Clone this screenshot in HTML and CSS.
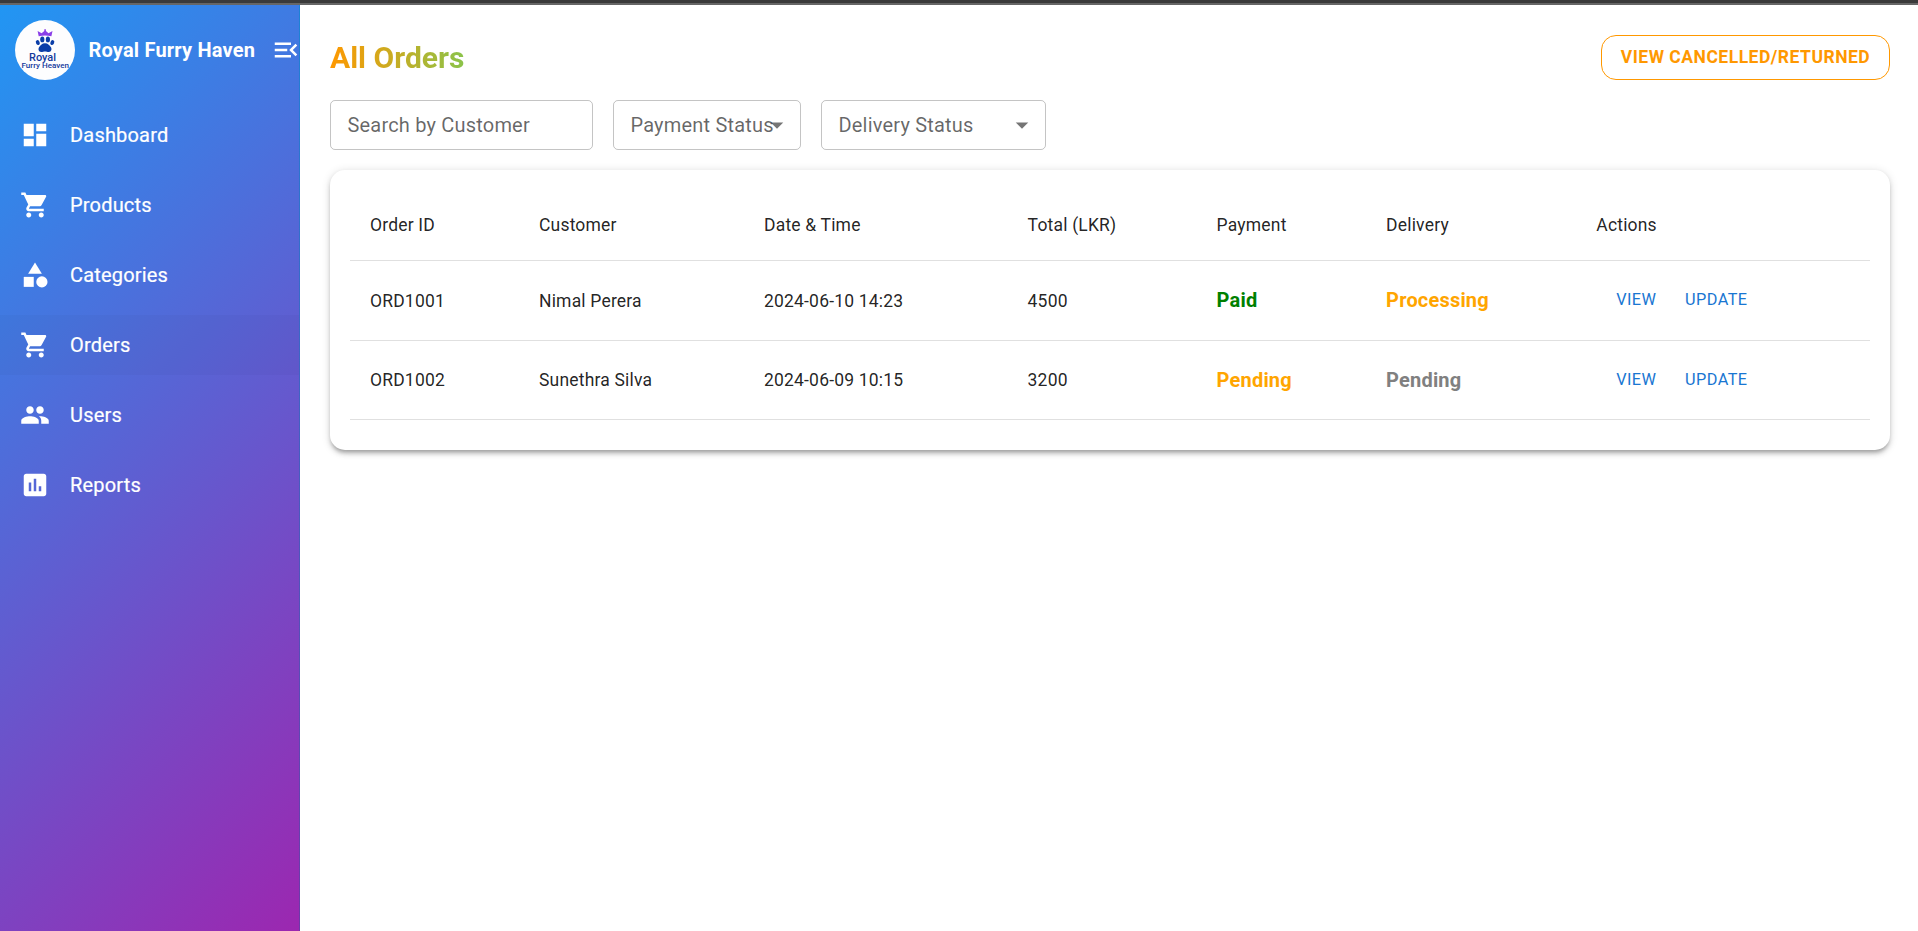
FILE: index.html
```html
<!DOCTYPE html>
<html lang="en">
<head>
<meta charset="utf-8">
<title>All Orders</title>
<link rel="stylesheet" href="styles.css">
</head>
<body>
<div class="topbar"></div>
<div class="app">
  <aside class="sidebar">
    <div class="brand">
      <svg class="logo" viewBox="0 0 60 60">
        <circle cx="30" cy="30" r="30" fill="#fdfdfe"/>
        <path fill="#8a3fe8" d="M23.7 16.2 22.6 11l4 2.2L29.3 11V9.2h1.6V11l2.6 2.2 4-2.2-1.1 5.2Q30 14.6 23.7 16.2z"/>
        <g fill="#0b3ea8">
          <ellipse cx="22.8" cy="22.6" rx="1.9" ry="2.5" transform="rotate(-22 22.8 22.6)"/>
          <ellipse cx="27.3" cy="19.4" rx="2.1" ry="2.9"/>
          <ellipse cx="32.9" cy="19.4" rx="2.1" ry="2.9"/>
          <ellipse cx="37.3" cy="22.6" rx="1.9" ry="2.5" transform="rotate(22 37.3 22.6)"/>
          <path d="M30 23.2c3 0 4.200 2 5.600 3.600 1.700 2 .9 5.200-1.800 5.200-1.500 0-2.400-.5-3.800-.5s-2.300.5-3.800.5c-2.700 0-3.500-3.200-1.800-5.200 1.400-1.600 2.600-3.600 5.600-3.600z"/>
        </g>
        <text class="logo-a" x="14" y="40.700" textLength="27" lengthAdjust="spacingAndGlyphs">Royal</text>
        <text class="logo-b" x="6.500" y="48.200" textLength="47.500" lengthAdjust="spacingAndGlyphs">Furry Heaven</text>
      </svg>
      <span class="brand-name">Royal Furry Haven</span>
      <svg class="icon toggle" viewBox="0 0 24 24"><path d="M3 18h13v-2H3v2zm0-5h10v-2H3v2zm0-7v2h13V6H3zm18 9.590L17.420 12 21 8.410 19.590 7l-5 5 5 5L21 15.590z"/></svg>
    </div>
    <nav class="nav">
      <a class="nav-item"><svg class="icon" viewBox="0 0 24 24"><path d="M3 13h8V3H3v10zm0 8h8v-6H3v6zm10 0h8V11h-8v10zm0-18v6h8V3h-8z"/></svg>Dashboard</a>
      <a class="nav-item"><svg class="icon" viewBox="0 0 24 24"><path d="M7 18c-1.100 0-1.990.9-1.990 2S5.900 22 7 22s2-.9 2-2-.9-2-2-2zM1 2v2h2l3.600 7.590-1.350 2.450c-.16.28-.25.61-.25.960 0 1.100.9 2 2 2h12v-2H7.420c-.14 0-.25-.11-.25-.25l.03-.12.9-1.630h7.450c.75 0 1.410-.41 1.750-1.030l3.580-6.490c.08-.14.12-.31.12-.48 0-.55-.45-1-1-1H5.210l-.94-2H1zm16 16c-1.100 0-1.990.9-1.990 2s.89 2 1.990 2 2-.9 2-2-.9-2-2-2z"/></svg>Products</a>
      <a class="nav-item"><svg class="icon" viewBox="0 0 24 24"><path d="m12 2-5.500 9h11z"/><circle cx="17.500" cy="17.500" r="4.500"/><path d="M3 13.500h8v8H3z"/></svg>Categories</a>
      <a class="nav-item active"><svg class="icon" viewBox="0 0 24 24"><path d="M7 18c-1.100 0-1.990.9-1.990 2S5.900 22 7 22s2-.9 2-2-.9-2-2-2zM1 2v2h2l3.600 7.590-1.350 2.450c-.16.28-.25.61-.25.960 0 1.100.9 2 2 2h12v-2H7.420c-.14 0-.25-.11-.25-.25l.03-.12.9-1.630h7.450c.75 0 1.410-.41 1.750-1.030l3.580-6.490c.08-.14.12-.31.12-.48 0-.55-.45-1-1-1H5.210l-.94-2H1zm16 16c-1.100 0-1.990.9-1.990 2s.89 2 1.990 2 2-.9 2-2-.9-2-2-2z"/></svg>Orders</a>
      <a class="nav-item"><svg class="icon" viewBox="0 0 24 24"><path d="M16 11c1.660 0 2.990-1.340 2.990-3S17.660 5 16 5c-1.660 0-3 1.340-3 3s1.340 3 3 3zm-8 0c1.660 0 2.990-1.340 2.990-3S9.660 5 8 5C6.340 5 5 6.340 5 8s1.340 3 3 3zm0 2c-2.330 0-7 1.170-7 3.500V19h14v-2.500c0-2.330-4.670-3.500-7-3.500zm8 0c-.29 0-.62.02-.97.05 1.160.84 1.970 1.970 1.970 3.450V19h6v-2.500c0-2.330-4.670-3.500-7-3.500z"/></svg>Users</a>
      <a class="nav-item"><svg class="icon" viewBox="0 0 24 24"><path d="M19 3H5c-1.100 0-2 .9-2 2v14c0 1.100.9 2 2 2h14c1.100 0 2-.9 2-2V5c0-1.100-.9-2-2-2zM9 17H7v-7h2v7zm4 0h-2V7h2v10zm4 0h-2v-4h2v4z"/></svg>Reports</a>
    </nav>
  </aside>
  <main class="main">
    <header class="head">
      <h1 class="title">All Orders</h1>
      <button class="outlined">View Cancelled/Returned</button>
    </header>
    <div class="filters">
      <div class="field search">Search by Customer</div>
      <div class="field payment">Payment Status<svg class="arrow" viewBox="0 0 24 24"><path d="M7 10l5 5 5-5z"/></svg></div>
      <div class="field delivery">Delivery Status<svg class="arrow" viewBox="0 0 24 24"><path d="M7 10l5 5 5-5z"/></svg></div>
    </div>
    <section class="card">
      <div class="row row-head">
        <span>Order ID</span><span>Customer</span><span>Date &amp; Time</span><span>Total (LKR)</span><span>Payment</span><span>Delivery</span><span>Actions</span>
      </div>
      <div class="row">
        <span>ORD1001</span><span>Nimal Perera</span><span>2024-06-10 14:23</span><span>4500</span><span class="status paid">Paid</span><span class="status orange">Processing</span><span class="actions"><button class="link">View</button><button class="link">Update</button></span>
      </div>
      <div class="row row-last">
        <span>ORD1002</span><span>Sunethra Silva</span><span>2024-06-09 10:15</span><span>3200</span><span class="status orange">Pending</span><span class="status gray">Pending</span><span class="actions"><button class="link">View</button><button class="link">Update</button></span>
      </div>
    </section>
  </main>
</div>
</body>
</html>
```
FILE: styles.css
```css
* { box-sizing: border-box; }
body {
  margin: 0;
  height: 931px;
  overflow: hidden;
  display: flex;
  flex-direction: column;
  background: #fff;
  font-family: Roboto, sans-serif;
  color: rgba(0, 0, 0, 0.87);
}
button { font-family: inherit; background: none; border: 0; margin: 0; text-transform: uppercase; letter-spacing: 0.02857em; }
.topbar { height: 5px; flex: none; background: #3a3a3a; border-bottom: 2px solid #666; }
.app { flex: 1; display: flex; min-height: 0; }

.sidebar {
  width: 300px;
  flex: none;
  overflow: hidden;
  color: #fff;
  background: linear-gradient(135deg, #2196f3, #9c27b0);
  border-right: 1px solid rgba(0, 0, 0, 0.12);
}
.brand { display: flex; align-items: center; padding: 15px 0 15px 15px; height: 90px; }
.logo { width: 60px; height: 60px; flex: none; }
.logo-a, .logo-b { fill: #14399c; font-family: Roboto, sans-serif; font-weight: 500; }
.logo-a { font-size: 10px; }
.logo-b { font-size: 7.8px; }
.brand-name { margin-left: 13.5px; width: 182.5px; flex: none; font-size: 20px; font-weight: 700; letter-spacing: 0.00938em; white-space: nowrap; }
.icon { width: 30px; height: 30px; fill: #fff; flex: none; }
.nav { display: flex; flex-direction: column; gap: 10px; padding-top: 10px; }
.nav-item { display: flex; align-items: center; gap: 20px; height: 60px; padding-left: 20px; font-size: 20px; font-weight: 400; letter-spacing: 0.00938em; -webkit-text-stroke: 0.2px #fff; }
.nav-item.active { background: rgba(0, 0, 0, 0.025); }

.main { flex: 1; padding: 30px 28px 0 30px; }
.head { display: flex; justify-content: space-between; align-items: center; height: 45px; }
.title {
  margin: 0;
  font-size: 30px;
  line-height: 40px;
  font-weight: 700;
  background: linear-gradient(90deg, #ff9800, #8bc34a);
  -webkit-background-clip: text;
  background-clip: text;
  color: transparent;
}
.outlined { width: 289px; height: 45px; padding: 0 0 2px; border: 1px solid #ff9800; border-radius: 15px; color: #ff9800; font-size: 17.5px; font-weight: 700; white-space: nowrap; }

.filters { display: flex; gap: 20px; margin-top: 20px; }
.field { position: relative; height: 50px; padding-left: 16.5px; border: 1px solid rgba(0, 0, 0, 0.23); border-radius: 5px; color: rgba(0, 0, 0, 0.6); font-size: 20px; line-height: 48px; letter-spacing: 0.00938em; white-space: nowrap; }
.search { width: 263px; }
.payment { width: 188px; }
.delivery { width: 225px; }
.arrow { position: absolute; right: 8px; top: 9px; width: 30px; height: 30px; fill: rgba(0, 0, 0, 0.54); }

.card {
  margin-top: 20px;
  height: 280px;
  padding: 20px;
  border-radius: 15px;
  background: #fff;
  box-shadow: 0 3.75px 3.75px -2.5px rgba(0, 0, 0, 0.2), 0 3.75px 5px 0 rgba(0, 0, 0, 0.14), 0 1.25px 10px 0 rgba(0, 0, 0, 0.12);
}
.row {
  display: grid;
  grid-template-columns: 169px 225px 263.6px 189px 169.5px 210.2px 1fr;
  align-items: center;
  height: 80px;
  padding-left: 20px;
  border-bottom: 1px solid #e0e0e0;
  font-size: 17.5px;
  letter-spacing: 0.01071em;
}
.row-head { height: 71px; }
.row-last { height: 79px; }
.status { font-size: 20px; font-weight: 700; letter-spacing: 0.00938em; padding-bottom: 1px; }
.row-last .status { padding-bottom: 0; }
.paid { color: green; }
.orange { color: orange; }
.gray { color: gray; }
.actions { display: flex; }
.link { width: 80px; height: 38px; padding: 0 0 2px; color: #1976d2; font-size: 16.25px; }
```
